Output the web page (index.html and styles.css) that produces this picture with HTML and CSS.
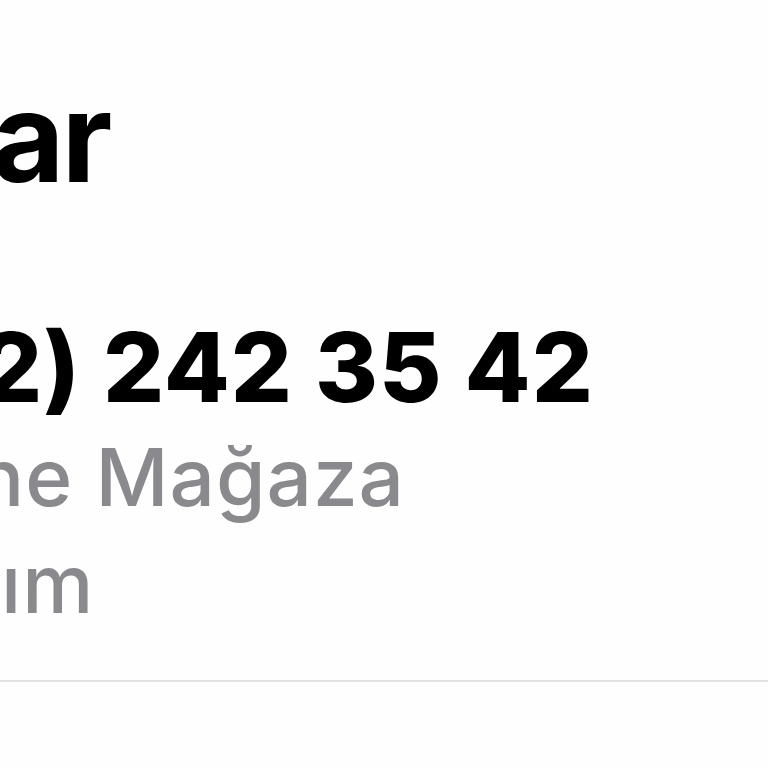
FILE: index.html
```html
<!DOCTYPE html>
<html lang="tr">
<head>
<meta charset="utf-8">
<title>Kişi</title>
<link rel="stylesheet" href="styles.css">
</head>
<body>
<main class="card">
  <h1 class="title"><span class="clip clip-title">ar</span></h1>
  <div class="phone"><span class="clip clip-phone">2) 242 35 42</span></div>
  <div class="sub"><span class="clip clip-sub1">ne Mağaza</span></div>
  <div class="sub"><span class="clip clip-sub2">ım</span></div>
  <hr class="divider">
</main>
</body>
</html>
```
FILE: styles.css
```css
html, body {
  margin: 0;
  padding: 0;
  background: #fefefe;
  overflow: hidden;
}
body {
  width: 768px;
  height: 768px;
  font-family: Inter, "Noto Sans", "Liberation Sans", sans-serif;
  color: #000;
}
.card {
  padding-top: 62px;
  overflow: hidden;
}
.clip {
  display: inline-block;
  white-space: nowrap;
}
.title {
  margin: 0;
  font-size: 125px;
  line-height: 150px;
  font-weight: 750;
  letter-spacing: -3px;
}
.clip-title { margin-left: -8px; }
.phone {
  margin-top: 99px;
  font-size: 96px;
  line-height: 112px;
  font-weight: 800;
  letter-spacing: 1px;
}
.clip-phone { margin-left: -19px; }
.sub {
  font-size: 80px;
  line-height: 107px;
  font-weight: 500;
  letter-spacing: 1px;
  color: #8a8a8e;
}
.clip-sub1 { margin-left: -24px; }
.clip-sub2 { margin-left: 1px; }
.divider {
  margin: 43px 0 0 0;
  border: 0;
  height: 2px;
  background: #e2e2e2;
}
```
